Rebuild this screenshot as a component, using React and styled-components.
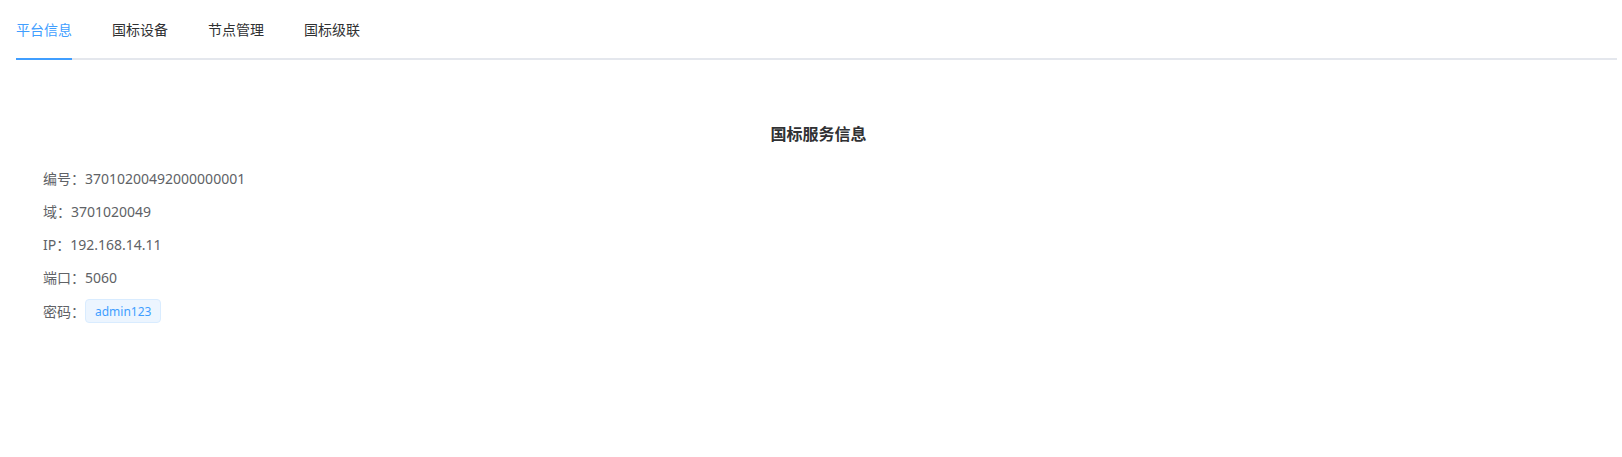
import styled, { createGlobalStyle } from "styled-components";

const tabs = ["平台信息", "国标设备", "节点管理", "国标级联"];

const rows = [
  { label: "编号", value: "37010200492000000001" },
  { label: "域", value: "3701020049" },
  { label: "IP", value: "192.168.14.11" },
  { label: "端口", value: "5060" },
];

const GlobalStyle = createGlobalStyle`
  body {
    margin: 0;
    background: #fff;
    font-family: "Noto Sans", "Noto Sans CJK SC", sans-serif;
  }
`;

const App = () => {
  return (
    <>
      <GlobalStyle />
      <Page>
        <Nav>
          {tabs.map((t, i) => (
            <TabItem key={t} $active={i === 0}>
              <TabLabel $active={i === 0}>{t}</TabLabel>
            </TabItem>
          ))}
        </Nav>
        <Content>
          <Title>国标服务信息</Title>
          <InfoList>
            {rows.map((r) => (
              <Row key={r.label}>
                <Label>{r.label}：</Label>
                <Value>{r.value}</Value>
              </Row>
            ))}
            <Row>
              <Label>密码：</Label>
              <Tag>admin123</Tag>
            </Row>
          </InfoList>
        </Content>
      </Page>
    </>
  );
};

export default App;

const Page = styled.div`
  padding: 10px 5px 0 16px;
`;

//tabs
const Nav = styled.div`
  display: flex;
  border-bottom: 2px solid #e4e7ed;
`;

const TabItem = styled.div`
  display: flex;
  padding: 0 20px;
  margin-bottom: -2px;
  cursor: pointer;
  &:first-child {
    padding-left: 0;
  }
  &:last-child {
    padding-right: 0;
  }
`;

const TabLabel = styled.div`
  font-size: 14px;
  line-height: 40px;
  padding-bottom: 8px;
  color: ${(p) => (p.$active ? "#409eff" : "#303133")};
  border-bottom: 2px solid ${(p) => (p.$active ? "#409eff" : "transparent")};
`;

const Content = styled.div`
  padding-top: 62px;
`;

const Title = styled.div`
  text-align: center;
  font-size: 16px;
  font-weight: bold;
  line-height: 25px;
  color: #303133;
  margin-bottom: 20px;
  padding-left: 4px;
`;

const InfoList = styled.div`
  padding-left: 27px;
  display: flex;
  flex-direction: column;
  gap: 11px;
`;

const Row = styled.div`
  display: flex;
  align-items: center;
  min-height: 22px;
  font-size: 14px;
  color: #606266;
`;

const Label = styled.span`
  color: #606266;
`;

const Value = styled.span`
  color: #606266;
`;

const Tag = styled.span`
  display: inline-flex;
  align-items: center;
  height: 24px;
  box-sizing: border-box;
  padding: 0 9px;
  font-size: 12px;
  color: #409eff;
  background-color: #ecf5ff;
  border: 1px solid #d9ecff;
  border-radius: 4px;
`;
